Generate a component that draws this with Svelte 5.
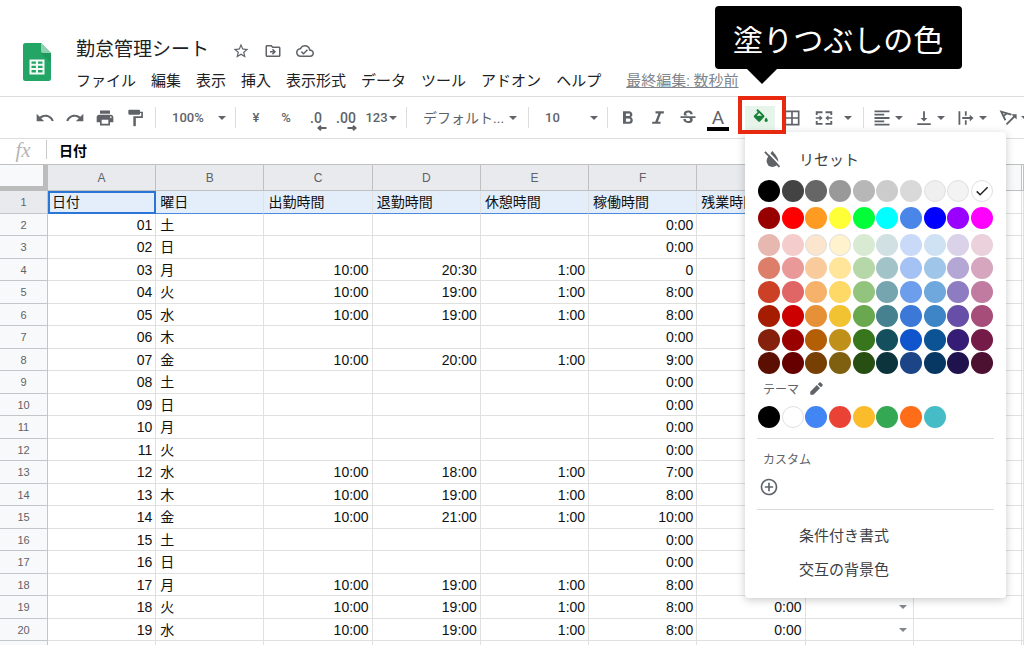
<script lang="ts">
  const menus = ['ファイル', '編集', '表示', '挿入', '表示形式', 'データ', 'ツール', 'アドオン', 'ヘルプ'];
  const columns = ['A', 'B', 'C', 'D', 'E', 'F', 'G', 'H', 'I'];
  const headings = ['日付', '曜日', '出勤時間', '退勤時間', '休憩時間', '稼働時間', '残業時間', ''];

  // date, weekday, start, end, break, worked, overtime
  const rows = [
    ['01', '土', '', '', '', '0:00', ''],
    ['02', '日', '', '', '', '0:00', ''],
    ['03', '月', '10:00', '20:30', '1:00', '0', ''],
    ['04', '火', '10:00', '19:00', '1:00', '8:00', ''],
    ['05', '水', '10:00', '19:00', '1:00', '8:00', ''],
    ['06', '木', '', '', '', '0:00', ''],
    ['07', '金', '10:00', '20:00', '1:00', '9:00', ''],
    ['08', '土', '', '', '', '0:00', ''],
    ['09', '日', '', '', '', '0:00', ''],
    ['10', '月', '', '', '', '0:00', ''],
    ['11', '火', '', '', '', '0:00', ''],
    ['12', '水', '10:00', '18:00', '1:00', '7:00', ''],
    ['13', '木', '10:00', '19:00', '1:00', '8:00', ''],
    ['14', '金', '10:00', '21:00', '1:00', '10:00', ''],
    ['15', '土', '', '', '', '0:00', ''],
    ['16', '日', '', '', '', '0:00', ''],
    ['17', '月', '10:00', '19:00', '1:00', '8:00', ''],
    ['18', '火', '10:00', '19:00', '1:00', '8:00', '0:00'],
    ['19', '水', '10:00', '19:00', '1:00', '8:00', '0:00'],
    ['', '', '', '', '', '', ''],
  ];

  const palette = [
    ['#000000 #434343 #666666 #999999 #b7b7b7 #cccccc #d9d9d9 #efefef #f3f3f3 #ffffff'],
    ['#980000 #ff0000 #ff9b20 #ffff38 #00ff38 #00ffff #4a86e8 #0000ff #9900ff #ff00ff'],
    [
      '#e6b8af #f4cccc #fce5cd #fff2cc #d9ead3 #d0e0e3 #c9daf8 #cfe2f3 #d9d2e9 #ead1dc',
      '#dd7e6b #ea9999 #f9cb9c #ffe599 #b6d7a8 #a2c4c9 #a4c2f4 #9fc5e8 #b4a7d6 #d5a6bd',
      '#cc4125 #e06666 #f6b26b #ffd966 #93c47d #76a5af #6d9eeb #6fa8dc #8e7cc3 #c27ba0',
      '#a61c00 #cc0000 #e69138 #f1c232 #6aa84f #45818e #3c78d8 #3d85c6 #674ea7 #a64d79',
      '#85200c #990000 #b45f06 #bf901a #38761d #134f5c #1155cc #0b5394 #351c75 #741b47',
      '#5b0f00 #660000 #783f04 #7f6010 #274e13 #0c343d #1c4587 #073763 #20124d #4c1130',
    ],
  ].map((group) => group.join(' ').split(' '));
  const theme = ['#000000', '#ffffff', '#4285f4', '#ea4335', '#fbbc2c', '#34a853', '#ff6d18', '#46bdc6'];
  const pale = ['#efefef', '#f3f3f3', '#ffffff', '#fce5cd', '#fff2cc'];

  let selected = $state('#ffffff');
</script>

{#snippet icon(d: string)}
  <svg class="icon" viewBox="0 0 24 24" aria-hidden="true"><path {d} /></svg>
{/snippet}

{#snippet swatch(color: string, checked: boolean)}
  <button class="swatch" aria-label={color} onclick={() => (selected = color)}>
    <span class="dot" class:pale={pale.includes(color)} style="background-color: {color}">
      {#if checked}
        <svg viewBox="0 0 24 24" aria-hidden="true"><path d="M5 12.5l4.5 4.5L19.5 7" /></svg>
      {/if}
    </span>
  </button>
{/snippet}

<div class="app">
  <header>
    <svg class="logo" viewBox="0 0 28 38" aria-hidden="true">
      <path fill="#23a566" d="M2.5 0H18l10 10v25.500a2.500 2.500 0 0 1-2.500 2.500h-23A2.500 2.500 0 0 1 0 35.500v-33A2.500 2.500 0 0 1 2.500 0z" />
      <path fill="#1c8f57" opacity=".6" d="M18 10h10v9z" />
      <path fill="#8ed1b1" d="M18 0l10 10h-8a2 2 0 0 1-2-2z" />
      <path fill="#f4fbf7" fill-rule="evenodd" d="M6.500 16.500h15v15h-15zM8.500 18.500v2.300h4.400v-2.300zM15 18.500v2.300h4.500v-2.300zM8.500 22.800v2.300h4.400v-2.300zM15 22.800v2.300h4.500v-2.300zM8.500 27.100v2.400h4.400v-2.400zM15 27.100v2.400h4.500v-2.400z" />
    </svg>
    <div class="heading">
      <div class="title-row">
        <h1>勤怠管理シート</h1>
        <button class="doc-btn" aria-label="スター">
          {@render icon('M22 9.24l-7.19-.62L12 2 9.190 8.630 2 9.240l5.460 4.730L5.820 21 12 17.270 18.180 21l-1.630-7.030L22 9.240zM12 15.400l-3.760 2.270 1-4.280-3.320-2.880 4.380-.38L12 6.100l1.710 4.040 4.380.38-3.320 2.880 1 4.280L12 15.400z')}
        </button>
        <button class="doc-btn" aria-label="移動">
          {@render icon('M20 6h-8l-2-2H4c-1.100 0-2 .9-2 2v12c0 1.100.9 2 2 2h16c1.100 0 2-.9 2-2V8c0-1.100-.9-2-2-2zm0 12H4V6h5.170l2 2H20v10zM12.160 12H8v2h4.160l-1.590 1.590L11.990 17 16 13.010 11.990 9l-1.410 1.410L12.160 12z')}
        </button>
        <button class="doc-btn" aria-label="保存済み">
          {@render icon('M19.350 10.040C18.670 6.590 15.640 4 12 4 9.110 4 6.610 5.640 5.360 8.040 2.350 8.360 0 10.900 0 14c0 3.310 2.690 6 6 6h13c2.760 0 5-2.240 5-5 0-2.640-2.050-4.780-4.650-4.960zM19 18H6c-2.210 0-4-1.790-4-4 0-2.050 1.530-3.760 3.560-3.970l1.070-.11.5-.95C8.080 7.140 9.940 6 12 6c2.620 0 4.880 1.860 5.390 4.430l.3 1.500 1.530.11c1.560.1 2.780 1.410 2.780 2.960 0 1.650-1.350 3-3 3zm-9-3.820l-2.090-2.090L6.500 13.500 10 17l6.010-6.010-1.410-1.410z')}
        </button>
      </div>
      <nav>
        {#each menus as menu}
          <button class="menu">{menu}</button>
        {/each}
        <a class="last-edit" href="#history">最終編集: 数秒前</a>
      </nav>
    </div>
  </header>

  <div class="toolbar" role="toolbar">
    <button class="tool" aria-label="元に戻す">{@render icon('M12.500 8c-2.650 0-5.050.99-6.900 2.600L2 7v9h9l-3.620-3.620c1.390-1.160 3.160-1.880 5.120-1.880 3.540 0 6.550 2.310 7.600 5.500l2.370-.78C21.080 11.030 17.150 8 12.500 8z')}</button>
    <button class="tool" aria-label="やり直し">{@render icon('M18.400 10.600C16.550 8.990 14.150 8 11.500 8c-4.650 0-8.580 3.030-9.960 7.220L3.900 16c1.050-3.190 4.050-5.500 7.600-5.500 1.950 0 3.730.72 5.120 1.880L13 16h9V7l-3.600 3.600z')}</button>
    <button class="tool" aria-label="印刷">{@render icon('M19 8H5c-1.660 0-3 1.340-3 3v6h4v4h12v-4h4v-6c0-1.660-1.340-3-3-3zm-3 11H8v-5h8v5zm3-7c-.55 0-1-.45-1-1s.45-1 1-1 1 .45 1 1-.45 1-1 1zm-1-9H6v4h12V3z')}</button>
    <button class="tool" aria-label="書式を貼り付け">{@render icon('M18 4.500V3c0-.55-.45-1-1-1H5c-.55 0-1 .45-1 1v4c0 .55.45 1 1 1h12c.55 0 1-.45 1-1V6h1.500v4H10v11c0 .55.45 1 1 1h1c.55 0 1-.45 1-1v-9h8.500V4.500z')}</button>
    <span class="sep"></span>
    <span class="picker zoom">
      <select aria-label="ズーム"><option>100%</option></select>
      <span class="arrow"></span>
    </span>
    <span class="sep"></span>
    <button class="tool">¥</button>
    <button class="tool">%</button>
    <button class="tool decimal" aria-label="小数点以下の桁数を減らす">
      .0<svg viewBox="0 0 10 6" aria-hidden="true"><path d="M9.500 3H2M4 .8L1.500 3 4 5.200" /></svg>
    </button>
    <button class="tool decimal" aria-label="小数点以下の桁数を増やす">
      .00<svg viewBox="0 0 10 6" aria-hidden="true"><path d="M.5 3H8M6 .8L8.500 3 6 5.200" /></svg>
    </button>
    <button class="tool format">123<span class="arrow"></span></button>
    <span class="sep"></span>
    <span class="picker font">
      <select aria-label="フォント"><option>デフォルト...</option></select>
      <span class="arrow"></span>
    </span>
    <span class="sep"></span>
    <span class="picker size">
      <select aria-label="フォントサイズ"><option>10</option></select>
      <span class="arrow"></span>
    </span>
    <span class="sep"></span>
    <button class="tool" aria-label="太字">{@render icon('M15.600 10.790c.97-.67 1.650-1.770 1.650-2.790 0-2.260-1.750-4-4-4H6v15h8.040c2.090 0 3.710-1.700 3.710-3.990 0-1.720-.86-3.420-2.150-4.220zM9.500 6.500h3.500c.83 0 1.500.67 1.500 1.500s-.67 1.700-1.500 1.700H9.500v-3.200zm4 10H9.500v-4H13.500c.83 0 1.500.97 1.500 2s-.67 2-1.500 2z')}</button>
    <button class="tool" aria-label="斜体">{@render icon('M9 4v2.600h3.500L8.700 16.400H5V19h10v-2.600h-3.200l3.800-9.800H19V4z')}</button>
    <button class="tool" aria-label="取り消し線">{@render icon('M6.850 7.080C6.850 4.370 9.450 3 12.240 3c1.640 0 3 .49 3.900 1.280.77.65 1.460 1.730 1.460 3.240h-3.010c0-.31-.05-.59-.15-.85-.29-.86-1.200-1.280-2.250-1.280-1.860 0-2.340 1.020-2.340 1.700 0 .48.25.88.74 1.210.38.25.77.48 1.410.7H7.390c-.21-.34-.54-.89-.54-1.920zM21 12v-2H3v2h9.620c1.150.45 1.960.75 1.960 1.970 0 1-.81 1.670-2.280 1.670-1.540 0-2.930-.54-2.930-2.510H6.400c0 .55.08 1.130.24 1.580.81 2.290 3.290 3.300 5.670 3.300 2.270 0 5.300-.89 5.300-4.050 0-.3-.01-1.160-.48-1.940H21V12z')}</button>
    <button class="tool text-color" aria-label="テキストの色">A</button>

    <div class="fill">
      <button class="tool active" aria-label="塗りつぶしの色">
        <svg class="icon" viewBox="0 0 24 24" aria-hidden="true">
          <path d="M17 8.700L8 0 6 2l2.200 2.200L3 9.200c-.7.7-.7 1.700 0 2.400l6 6c.6.6 1.600.6 2.300 0l5.700-6c.7-.8.7-2.200 0-2.900zM6.400 9.500L10.200 5.800 14 9.500zM20 12s-2.300 2.500-2.300 4c0 1.300 1 2.300 2.300 2.300s2.300-1 2.300-2.300c0-1.500-2.300-4-2.300-4z" />
        </svg>
      </button>

      <div class="panel">
        <button class="item reset">
          <svg class="icon" viewBox="0 0 24 24" aria-hidden="true">
            <path d="M12.500 2.500s7 7.500 7 12a7 7 0 0 1-14 0c0-4.500 7-12 7-12z" />
            <path fill="none" stroke="#fff" stroke-width="2.200" d="M5.500 2l17 18" />
            <path fill="none" stroke="currentColor" stroke-width="2.200" d="M3.500 3.500l17.500 18" />
          </svg>
          リセット
        </button>
        {#each palette as group}
          <div class="swatches">
            {#each group as color}
              {@render swatch(color, selected === color)}
            {/each}
          </div>
        {/each}
        <div class="label theme-label">
          テーマ
          <button class="edit" aria-label="テーマを編集">
            {@render icon('M2 17v5h5L17.500 11.500l-5-5zM21.600 7.400c.6-.6.6-1.500 0-2.100l-2.900-2.900c-.6-.6-1.500-.6-2.100 0l-2.700 2.700 5 5z')}
          </button>
        </div>
        <div class="swatches theme">
          {#each theme as color}
            {@render swatch(color, false)}
          {/each}
        </div>
        <hr />
        <div class="label">カスタム</div>
        <button class="add" aria-label="カスタムの色を追加">
          {@render icon('M13 7h-2v4H7v2h4v4h2v-4h4v-2h-4V7zm-1-5C6.480 2 2 6.480 2 12s4.480 10 10 10 10-4.480 10-10S17.520 2 12 2zm0 18c-4.410 0-8-3.590-8-8s3.590-8 8-8 8 3.590 8 8-3.590 8-8 8z')}
        </button>
        <hr />
        <button class="item">条件付き書式</button>
        <button class="item">交互の背景色</button>
      </div>

      <span class="highlight"></span>
      <div class="callout">塗りつぶしの色</div>
    </div>

    <button class="tool borders" aria-label="枠線">{@render icon('M3 3v18h18V3H3zm8 16H5v-6h6v6zm0-8H5V5h6v6zm8 8h-6v-6h6v6zm0-8h-6V5h6v6z')}</button>
    <button class="tool split merge" aria-label="セルを結合">
      {@render icon('M1 3h9v2.500H3.500V8H1zM14 3h9v5h-2.500V5.500H14zM1 16h2.500v2.500H10V21H1zM20.500 16H23v5h-9v-2.500h6.500zM1 11h5V8.200L10.200 12 6 15.800V13H1zM23 11h-5V8.200L13.800 12l4.200 3.800V13h5z')}
      <span class="arrow"></span>
    </button>
    <span class="sep"></span>
    <button class="tool split" aria-label="水平方向の配置">
      {@render icon('M2 2h20v2.400H2zM2 6.400h13v2.400H2zM2 10.800h20v2.400H2zM2 15.200h13v2.400H2zM2 19.600h20V22H2z')}
      <span class="arrow"></span>
    </button>
    <button class="tool split" aria-label="垂直方向の配置">
      {@render icon('M16.500 12H13.200V3h-2.400v9H7.500l4.500 4.500zM3 19v2.400h18V19z')}
      <span class="arrow"></span>
    </button>
    <button class="tool split" aria-label="テキストを折り返す">
      {@render icon('M2 3h2.400v18H2zM10.500 3h2.400v6h-2.400zM10.500 15h2.400v6h-2.400zM7 10.800h10V7.500l5 4.500-5 4.500v-3.300H7z')}
      <span class="arrow"></span>
    </button>
    <button class="tool split" aria-label="テキストの回転">
      <svg class="icon" viewBox="0 0 24 24" aria-hidden="true">
        <path fill="none" stroke="currentColor" stroke-width="2.400" d="M8.500 15L3 3.500l13.500 4M6 9.500l5-4M10 20.500L20.500 10" />
        <path d="M16.500 7h7v7z" />
      </svg>
      <span class="arrow"></span>
    </button>
  </div>

  <div class="formula">
    <label for="cell-value">fx</label>
    <input id="cell-value" type="text" value="日付" />
  </div>

  <div class="sheet">
    <table>
      <colgroup>
        <col class="col-num" />
        {#each columns as _}<col />{/each}
        <col class="col-end" />
      </colgroup>
      <thead>
        <tr>
          <td class="corner"></td>
          {#each columns as name, i}
            <th scope="col" class:in-range={i < 8}>{name}</th>
          {/each}
          <td></td>
        </tr>
      </thead>
      <tbody>
        <tr class="range">
          <th scope="row" class="in-range">1</th>
          {#each headings as text, i}
            <td class:current={i === 0}>{text}</td>
          {/each}
          <td class="outside"></td>
          <td class="outside"></td>
        </tr>
        {#each rows as row, r}
          <tr>
            <th scope="row">{row[0] ? r + 2 : ''}</th>
            {#each row as value, c}
              <td class:num={c !== 1}>{value}</td>
            {/each}
            <td class="choice">
              {#if row[6]}
                <button aria-label="リストを開く"><span class="arrow"></span></button>
              {/if}
            </td>
            <td></td>
            <td></td>
          </tr>
        {/each}
      </tbody>
    </table>
  </div>
</div>

<style>
  :global(body) { background: #fff; }
  .app { display: flex; flex-direction: column; height: 100vh; overflow: hidden; font-family: Roboto, "Liberation Sans", "Noto Sans CJK JP", sans-serif; color: #202124; }
  button, select, input { font: inherit; color: inherit; border: none; background: none; padding: 0; margin: 0; }
  button { cursor: pointer; }
  .icon { display: block; width: 20px; height: 20px; fill: currentColor; flex: none; }
  .arrow { flex: none; width: 0; height: 0; border: 4px solid transparent; border-top-color: #5f6368; border-bottom: none; }

  header { display: flex; flex: none; height: 97px; box-sizing: border-box; padding: 35px 0 0 23px; border-bottom: 1px solid #dcdddf; white-space: nowrap; }
  .logo { width: 28px; height: 38px; margin: 8px 25px 0 0; flex: none; }
  .title-row { display: flex; align-items: center; height: 30px; }
  h1 { margin: 0 16px 0 0; font-size: 19px; line-height: 28px; font-weight: 400; }
  .doc-btn { display: flex; justify-content: center; width: 32px; margin-top: 2px; color: #5f6368; }
  .doc-btn .icon { width: 18px; height: 18px; }
  nav { display: flex; align-items: center; gap: 15px; height: 32px; font-size: 15px; line-height: 20px; }
  .last-edit { margin-left: 10px; color: #80868b; text-decoration: underline; }

  .toolbar { display: flex; align-items: center; flex: none; height: 41px; padding-left: 30px; border-bottom: 1px solid #dcdddf; color: #5f6368; font-size: 13px; font-weight: 500; white-space: nowrap; }
  .tool { display: flex; align-items: center; justify-content: center; flex: none; position: relative; width: 30px; height: 24px; }
  .sep { flex: none; width: 1px; height: 21px; margin: 0 5px; background: #dadce0; }
  .picker { display: flex; align-items: center; flex: none; box-sizing: border-box; padding: 0 4px 0 11px; }
  .picker select { appearance: none; flex: 1; min-width: 0; }
  .zoom { width: 69px; }
  .font { width: 111px; padding-right: 6px; font-size: 14px; font-weight: 400; }
  .size { width: 68px; }
  .decimal { font-size: 14px; }
  .decimal svg { position: absolute; right: 4px; bottom: -1px; width: 10px; height: 6px; fill: none; stroke: currentColor; stroke-width: 2; }
  .format { width: 40px; gap: 1px; }
  .text-color { font-size: 19px; line-height: 20px; font-weight: 400; }
  .text-color::after { content: ""; position: absolute; left: 4px; right: 4px; bottom: -1px; height: 4px; background: #000; }
  .split { justify-content: flex-start; gap: 3px; width: 42px; padding-left: 3px; box-sizing: border-box; }
  .split .icon { width: 20px; height: 18px; }
  .borders { margin-left: 2px; }
  .merge { width: 51px; gap: 10px; padding-left: 7px; }

  .fill { position: relative; flex: none; margin-left: 12px; }
  .active { background: #e6f4ea; color: #188038; }
  .active .icon { width: 17px; height: 17px; }
  .highlight { position: absolute; left: -7px; right: -11px; top: -10px; bottom: -4px; border: 4px solid #e8290f; pointer-events: none; z-index: 2; }
  .callout { position: absolute; left: -30px; bottom: 61px; padding: 13px 19px 6px 18px; border-radius: 4px; background: #000; color: #fff; font-size: 30px; line-height: 44px; font-weight: 400; z-index: 3; }
  .callout::after { content: ""; position: absolute; left: 32px; top: 100%; border: 15px solid transparent; border-top-color: #000; border-bottom: none; }

  .panel { position: absolute; left: 0; top: 26px; width: 261px; box-sizing: border-box; padding: 10px 12px 12px; background: #fff; border-radius: 4px; box-shadow: 0 2px 8px rgba(60, 64, 67, .28); color: #3c4043; font-weight: 400; z-index: 1; }
  .item { display: flex; align-items: center; width: 100%; height: 34px; padding-left: 42px; font-size: 15px; }
  .reset { padding-left: 5px; gap: 17px; margin-bottom: 4px; }
  .reset .icon { color: #5f6368; }
  .swatches { display: grid; grid-template-columns: repeat(10, 1fr); margin-bottom: 3px; }
  .swatch { display: flex; align-items: center; justify-content: center; aspect-ratio: 1; }
  .dot { display: flex; align-items: center; justify-content: center; width: 22px; height: 22px; box-sizing: border-box; border-radius: 50%; }
  .pale { border: 1px solid #dfe0e1; }
  .dot svg { width: 18px; height: 18px; flex: none; fill: none; stroke: #202124; stroke-width: 2; }
  .label { display: flex; align-items: center; gap: 10px; height: 24px; padding-left: 6px; font-size: 12px; color: #5f6368; }
  .theme-label { height: 20px; }
  .edit .icon { width: 15px; height: 15px; }
  .theme { margin: 7px 0 0; }
  hr { height: 1px; margin: 9px 0 8px; border: none; background: #dadce0; }
  .add { display: flex; align-items: center; height: 26px; margin: 3px 0 0 2px; color: #5f6368; }

  .formula { display: flex; align-items: center; flex: none; height: 25px; padding-bottom: 4px; margin-bottom: -4px; box-sizing: border-box; }
  .formula { margin-bottom: 0; }
  .formula label { width: 46px; text-align: center; font: italic 21px/20px "Liberation Serif", serif; color: #b4b6b9; }
  .formula input { flex: 1; min-width: 0; height: 19px; padding-left: 12px; border-left: 1px solid #c8cacd; font-size: 14px; font-weight: 700; color: #000; }

  .sheet { flex: 1; min-height: 0; overflow: hidden; font-family: "Liberation Sans", "Noto Sans CJK JP", sans-serif; }
  table { width: 100%; table-layout: fixed; border-collapse: separate; border-spacing: 0; border-top: 1px solid #c0c0c0; }
  .col-num { width: 48px; }
  .col-end { width: 2px; }
  th, td { box-sizing: border-box; height: 22px; padding: 0 3px 0 4px; border-right: 1px solid #e0e0e0; border-bottom: 1px solid #e0e0e0; font-size: 14px; line-height: 18px; text-align: left; white-space: nowrap; overflow: hidden; color: #111; }
  tbody tr:nth-child(odd) > * { height: 23px; }
  th { padding: 0; border-color: #c4c6c9; background: #f8f9fa; font-size: 11px; font-weight: 400; text-align: center; color: #5f6368; }
  thead > tr > * { height: 26px; border-color: #c0c0c0; }
  thead th { font-size: 12px; }
  .in-range { background: #e8eaed; }
  .corner { background: #f8f9fa; border-right: 5px solid #bcbcbc; border-bottom: 5px solid #bcbcbc; }
  .num { text-align: right; }
  .range td { background: #e4eefb; border-bottom-color: #4a8be0; }
  .range td.current { outline: 2px solid #2a76d8; outline-offset: -2px; }
  .range td.outside { background: #fff; border-bottom-color: #e0e0e0; }
  .choice { padding-right: 6px; }
  .choice button { display: flex; margin-left: auto; }
  .choice .arrow { border-top-color: #80868b; }
</style>
